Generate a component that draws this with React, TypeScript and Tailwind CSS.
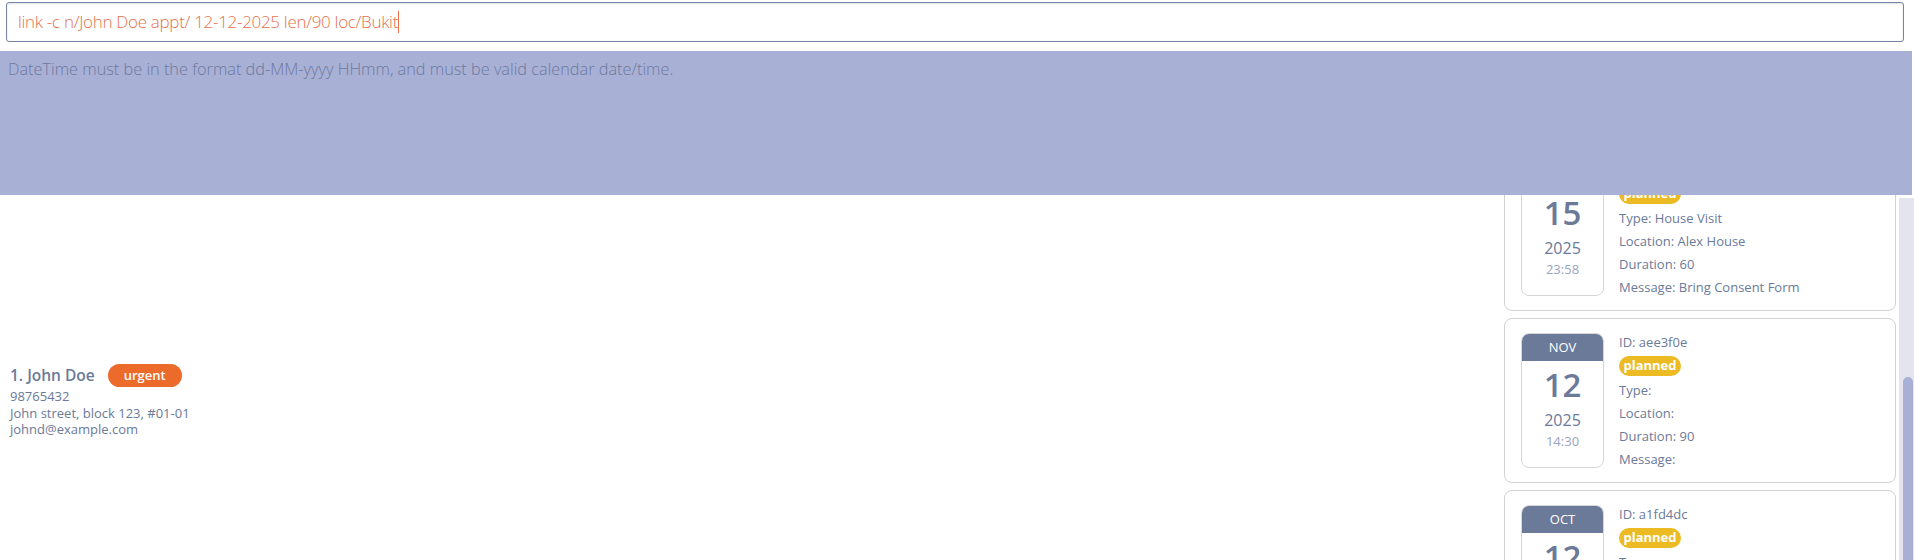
import React from "react";

const slate = "text-[#6b7a99]";

function DateBox({ mon, day, year, time }: { mon: string; day: string; year: string; time: string }) {
  return (
    <div className="w-[83px] h-[135px] shrink-0 border border-[#d6d6d6] rounded-[8px] overflow-hidden flex flex-col items-center bg-white">
      <div className="w-full h-[27px] bg-[#6b7a99] text-white text-[13px] flex items-center justify-center">{mon}</div>
      <div className={`mt-[4px] text-[33px] leading-[40px] font-semibold ${slate}`}>{day}</div>
      <div className={`mt-[5px] text-[16px] leading-[20px] ${slate}`}>{year}</div>
      <div className="mt-[3px] text-[13px] leading-[16px] text-[#9aa3bf]">{time}</div>
    </div>
  );
}

function ApptCard(props: {
  mon: string; day: string; year: string; time: string; id: string;
  type: string; loc: string; dur: string; msg: string;
}) {
  return (
    <div className="w-[392px] h-[165px] shrink-0 border border-[#d2d2d2] rounded-[8px] bg-white px-[16px] py-[14px] flex gap-[15px]">
      <DateBox mon={props.mon} day={props.day} year={props.year} time={props.time} />
      <div className={`flex flex-col text-[13px] ${slate}`}>
        <div className="h-[18px] leading-[18px]">ID: {props.id}</div>
        <div className="mt-[5px] h-[21px] w-[62px] rounded-full bg-[#ecba22] text-white font-bold text-[13px] flex items-center justify-center">planned</div>
        <div className="mt-[3px] h-[23px] leading-[23px]">Type: {props.type}</div>
        <div className="h-[23px] leading-[23px]">Location: {props.loc}</div>
        <div className="h-[23px] leading-[23px]">Duration: {props.dur}</div>
        <div className="h-[23px] leading-[23px]">Message: {props.msg}</div>
      </div>
    </div>
  );
}

export default function App() {
  return (
    <div className="w-[1914px] h-[560px] overflow-hidden bg-white flex flex-col font-['Open_Sans',sans-serif]">
      <div className="pl-[6px] pr-[10px] pt-[2px]">
        <div className="h-[40px] border border-[#7684a8] rounded-[3px] bg-white shadow-[inset_0_1px_2px_rgba(0,0,0,0.12)] flex items-center pl-[11px]">
          <span className="text-[17px] font-light text-[#e5704a] tracking-[-0.3px]">link -c n/John Doe appt/ 12-12-2025 len/90 loc/Bukit</span>
          <span className="w-[1px] h-[22px] bg-[#e5704a]"></span>
        </div>
      </div>
      <div className="mt-[9px] mr-[2px] h-[144px] bg-[#a9b0d5] pl-[8px] pt-[6px]">
        <span className="text-[16.3px] font-light text-[#6c7aa0]">DateTime must be in the format dd-MM-yyyy HHmm, and must be valid calendar date/time.</span>
      </div>
      <div className="flex-1 min-h-0 flex">
        <div className="flex-1 pl-[10px] pt-[169px]">
          <div className="flex items-center gap-[13px] h-[23px]">
            <span className={`text-[15.5px] font-semibold ${slate}`}>1. John Doe</span>
            <span className="h-[23px] w-[74px] rounded-full bg-[#ec6a2a] text-white text-[13px] font-semibold flex items-center justify-center">urgent</span>
          </div>
          <div className={`text-[13px] leading-[16.5px] ${slate} mt-[1px]`}>
            <div>98765432</div>
            <div>John street, block 123, #01-01</div>
            <div>johnd@example.com</div>
          </div>
        </div>
        <div className="w-[410px] flex">
          <div className="flex-1 overflow-hidden">
            <div className="mt-[-49px] flex flex-col gap-[7px]">
              <ApptCard mon="DEC" day="15" year="2025" time="23:58" id="b7c21aa" type="House Visit" loc="Alex House" dur="60" msg="Bring Consent Form" />
              <ApptCard mon="NOV" day="12" year="2025" time="14:30" id="aee3f0e" type="" loc="" dur="90" msg="" />
              <ApptCard mon="OCT" day="12" year="2025" time="10:00" id="a1fd4dc" type="" loc="" dur="60" msg="" />
            </div>
          </div>
          <div className="w-[15px] mt-[3px] bg-[#e4e4ef] flex flex-col pl-[4px]">
            <div className="mt-[179px] flex-1 w-[10px] bg-[#a9b0d5] rounded-t-[5px]"></div>
          </div>
        </div>
      </div>
    </div>
  );
}
